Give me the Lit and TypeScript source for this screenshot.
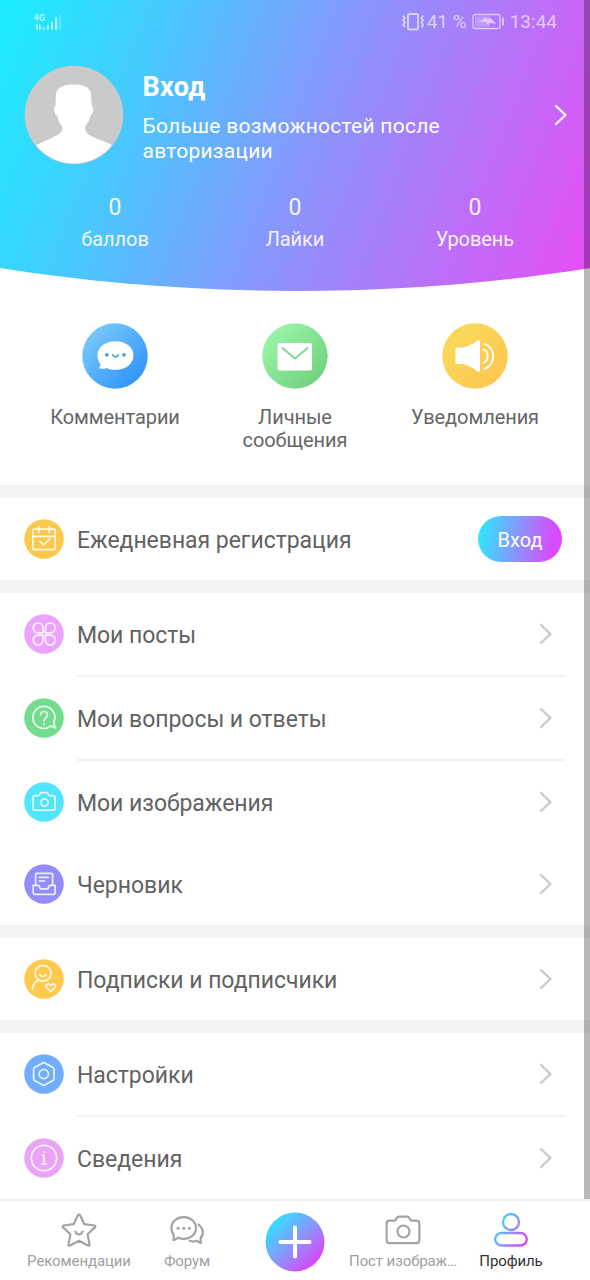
import { LitElement, html, svg, css } from "lit";
import { customElement, property } from "lit/decorators.js";

const chevron = (cls: string) => html`<svg class=${cls} width="14" height="22" viewBox="0 0 14 22" fill="none" stroke="currentColor" stroke-width="2.3" stroke-linecap="round" stroke-linejoin="round"><path d="M2 2l9.500 9L2 20"/></svg>`;

const glyphs: Record<string, unknown> = {
  calendar: svg`<rect x="8.800" y="10.200" width="22.400" height="20.400" rx="1.600"/><path d="M9 17.300H31M14.800 7.600v6M25.200 7.600v6M15.800 22.200l3.600 3.800 6.600-6.400"/>`,
  clover: svg`<path d="M19 18.800h-4.900a4.900 4.900 0 1 1 4.900-4.900zM21.400 18.800h4.900a4.900 4.900 0 1 0-4.900-4.900zM19 21.200h-4.900a4.900 4.900 0 1 0 4.900 4.900zM21.400 21.200h4.900a4.900 4.900 0 1 1-4.900 4.900z"/>`,
  question: svg`<path d="M26.900 27.900A11 11 0 1 1 30.200 23.200c-.7 1.900.3 4.700 1.300 6.700-1.500-.1-3.200-1.300-4.600-2z"/><path d="M16.600 16.800a3.400 3.400 0 1 1 5.300 2.800c-1.300.9-1.900 1.600-1.900 3.200M20 25.600v1"/>`,
  camera: svg`<path d="M10.900 13.600h4l1.900-3h6.400l1.900 3h4a1.800 1.800 0 0 1 1.800 1.800v11a1.800 1.800 0 0 1-1.800 1.800H10.900a1.800 1.800 0 0 1-1.800-1.800v-11a1.800 1.800 0 0 1 1.800-1.800z"/><circle cx="20.500" cy="20.600" r="3.700"/>`,
  draft: svg`<path d="M11.600 21V10.400a1 1 0 0 1 1-1h15a1 1 0 0 1 1 1V21M15.400 13.400h9M15.400 17h5"/><path d="M9.200 21.300h5.600l1.600 3.600h7.500l1.600-3.600h5.600v7.800a1.300 1.300 0 0 1-1.300 1.300H10.500a1.300 1.300 0 0 1-1.300-1.300z"/>`,
  follow: svg`<circle cx="19" cy="14.200" r="7.900"/><path d="M15.900 15.600c1.400 2.500 4.800 2.500 6.200 0M14.600 20.900c-3.800 1.900-5.900 5-6.100 9.200M26.700 32.300l-4-3.700c-1.800-2 .9-4.700 2.900-3.100l1.100.9 1.100-.9c2-1.600 4.700 1.100 2.900 3.100z"/>`,
  settings: svg`<path d="M18.800 9l-8.200 4.600a2 2 0 0 0-1 1.800v9.200a2 2 0 0 0 1 1.800l8.200 4.600a2 2 0 0 0 2 0l8.200-4.600a2 2 0 0 0 1-1.800v-9.200a2 2 0 0 0-1-1.800L20.800 9a2 2 0 0 0-2 0z"/><circle cx="19.800" cy="20" r="4.600"/>`,
  info: svg`<circle cx="20" cy="20" r="12.700"/><path d="M18.500 17.400H20v8.400M17.900 26h4.300M20 13.600v.6"/>`,
};

@customElement("menu-row")
class MenuRow extends LitElement {
  @property() icon = "";
  @property() color = "";
  @property() label = "";
  @property({ type: Boolean }) line = false;
  @property({ type: Boolean }) button = false;

  static styles = css`
    :host { display: block; padding-left: 24px; background: #fff; }
    .row { display: flex; align-items: center; height: 82px; }
    .disc { width: 40px; height: 40px; flex: none; }
    .label { flex: 1; margin-left: 13px; padding-top: 4px; font-size: 23px; line-height: 28px; letter-spacing: -.04px; color: #626262; white-space: nowrap; }
    .arrow { color: #c8c8c8; margin-right: 37px; }
    .line { height: 2px; margin: 0 25px 0 53px; background: #f2f2f2; }
    .login { width: 84px; height: 46px; margin-right: 28px; padding: 2px 0 0; border: 0; border-radius: 23px; background: linear-gradient(100deg, #2de8fc 4%, #dc48fb 88%); color: #fff; font: 20px Roboto, sans-serif; }
  `;

  render() {
    return html`
      <div class="row">
        <svg class="disc" viewBox="0 0 40 40">
          <circle cx="20" cy="20" r="19.800" fill=${this.color}></circle>
          <g fill="none" stroke="#fff" stroke-opacity=".85" stroke-width="1.700" stroke-linecap="round" stroke-linejoin="round">${glyphs[this.icon]}</g>
        </svg>
        <span class="label">${this.label}</span>
        ${this.button ? html`<button class="login">Вход</button>` : chevron("arrow")}
      </div>
      ${this.line ? html`<div class="line"></div>` : ""}
    `;
  }
}

@customElement("app-root")
class AppRoot extends LitElement {
  static styles = css`
    :host { display: flex; flex-direction: column; position: relative; width: 590px; height: 1280px; overflow: hidden; background: #fff; font-family: Roboto, sans-serif; }
    svg { display: block; }
    .hero { box-sizing: border-box; height: 291px; color: #fff; background: linear-gradient(111deg, #1aeffe 0%, #48c8fd 25%, #8896fd 52%, #e94cf6 100%); clip-path: path("M0 0H590V268C400 298.500 190 298.500 0 268Z"); }
    .status { display: flex; align-items: center; height: 43px; padding: 0 33px; opacity: .62; font-size: 19px; }
    .signal { margin-right: auto; }
    .time { margin-left: 5px; }
    .battery { margin-left: 5px; }
    .profile { display: flex; align-items: center; height: 142px; padding: 1px 22px 0 24px; }
    .avatar { flex: none; width: 100px; height: 100px; }
    .who { flex: 1; margin-left: 18.500px; padding-top: 5px; }
    .name { font-size: 27px; line-height: 32px; font-weight: 700; letter-spacing: .3px; }
    .hint { margin-top: 11px; font-size: 21px; line-height: 25px; letter-spacing: .25px; width: 320px; }
    .three { display: grid; grid-template-columns: repeat(3, 180px); justify-content: center; text-align: center; }
    .stat { opacity: .9; }
    .count { font-size: 23px; line-height: 28px; margin-top: 8px; }
    .caption { font-size: 20px; line-height: 24px; margin-top: 5px; letter-spacing: -.05px; }
    .shortcuts { box-sizing: border-box; height: 194px; padding-top: 31.500px; }
    .shortcut { display: flex; flex-direction: column; align-items: center; color: #666; font-size: 20px; line-height: 23px; letter-spacing: -.07px; }
    .shortcut span { margin-top: 17px; max-width: 150px; }
    .gap { height: 13px; background: #f4f4f4; }
    .content { flex: 1; overflow: hidden; }
    .tabs { box-sizing: border-box; flex: none; height: 81px; border-top: 2px solid #f0f0f0; display: grid; grid-template-columns: repeat(5, 108px); padding-left: 25px; background: #fff; }
    .tab { display: flex; flex-direction: column; align-items: center; padding-top: 10px; color: #a0a0a0; font-size: 15px; line-height: 18px; letter-spacing: -.1px; white-space: nowrap; }
    .tab span { margin-top: 3px; }
    .current { color: #333; }
    .plus { padding-top: 11px; }
    .scrollbar { position: absolute; right: 0; top: 0; width: 6px; height: 1199px; background: rgba(0, 0, 0, .28); }
  `;

  render() {
    return html`
      <div class="content">
        <header class="hero">
          <div class="status">
            <svg class="signal" width="30" height="22" viewBox="0 0 30 22" fill="#fff"><text x="0.500" y="9.500" font-family="Roboto" font-size="9" font-weight="700">4G</text><path d="M1.500 15.500l2.500-3 .8.800v5.400H3v-4zM6 12.700h1.300v3.600l1.700-.3v.8l-2 2-1-1zM10 16.700h2v2h-2zM14 14.500h2v4.200h-2zM18 11h2v7.700h-2zM22 6.500h2.200v12.200H22z"/><path opacity=".35" d="M26 2.500h2v16.200h-2z"/></svg>
            <svg width="26" height="22" viewBox="0 0 26 22" fill="none" stroke="#fff" stroke-width="1.900"><rect x="7" y="3" width="10" height="15.500" rx="1.500"/><path d="M2 5l1.800 2L2.200 9.200 3.800 11.500l-1.600 2.300L3.800 16M22 4.500L20.500 7l1.500 2.300-1.500 2.400 1.500 2.300-1.200 2.500"/></svg>
            <span>41 %</span>
            <svg class="battery" width="33" height="18" viewBox="0 0 33 18"><rect x="1" y="1.500" width="27" height="14" rx="2" fill="none" stroke="#fff" stroke-width="1.300"/><path d="M3 3.500h15v10H3z" fill="#fff" opacity=".4"/><path d="M7 8.500l7.500-4.300 1 3 2.500-2.400 6.500 5.900-7.500-.8-.8 2-2.700-3z" fill="#fff"/><path d="M31 4.500v8" stroke="#fff" stroke-width="1.800"/></svg>
            <span class="time">13:44</span>
          </div>
          <div class="profile">
            <svg class="avatar" viewBox="0 0 100 100">
              <defs><clipPath id="face"><circle cx="50" cy="50" r="48.500"/></clipPath></defs>
              <circle cx="50" cy="50" r="49.300" fill="#cacaca"/>
              <path clip-path="url(#face)" fill="#fff" d="M32 29C33 22 40 19.500 50 19.500S66 22 67 29l.7 12c1.800.3 2 3 1.300 5.500-.5 2.200-1.500 4-2.800 4.300-.8 5-3.200 8.500-5.200 11-.5 7 5.500 8.700 10.500 11.200C79.500 76.500 86 78 92 83v19H8V83c6-4.500 13-6.500 20.500-10.500C33.500 70 39 68 38.500 61.800c-2.500-2.500-4.300-6-5.200-11-1.500-.3-2.500-2.100-3-4.300-.6-2.500-.2-5.200 1.200-5.500z"/>
            </svg>
            <div class="who"><div class="name">Вход</div><div class="hint">Больше возможностей после авторизации</div></div>
            ${chevron("go")}
          </div>
          <div class="three">
            ${["баллов", "Лайки", "Уровень"].map((t) => html`<div class="stat"><div class="count">0</div><div class="caption">${t}</div></div>`)}
          </div>
        </header>
        <section class="three shortcuts">
          <div class="shortcut">
            <svg width="66" height="66" viewBox="0 0 66 66"><defs><linearGradient id="b" x1="0" y1="0" x2="1" y2="1"><stop offset=".1" stop-color="#7bcbfa"/><stop offset=".9" stop-color="#2e92fb"/></linearGradient></defs><circle cx="33" cy="33" r="32.700" fill="url(#b)"/><path fill="#fff" d="M33.500 18.300c10.500 0 18 6.200 18 14.200s-7.500 14.300-18 14.300c-3.400 0-6.400-.7-9-1.900-2.500 1-5 1.200-8 .4 1.600-1.300 2.200-2.700 1.800-4.500-1.800-2.300-2.800-5.100-2.800-8.300 0-8 7.500-14.200 18-14.200z"/><g fill="#429cf8"><circle cx="24.800" cy="31.800" r="1.900"/><circle cx="42" cy="31.800" r="1.900"/></g><path d="M30.800 32c.8 2.400 4.700 2.400 5.500 0" fill="none" stroke="#429cf8" stroke-width="1.800" stroke-linecap="round"/></svg>
            <span>Комментарии</span>
          </div>
          <div class="shortcut">
            <svg width="66" height="66" viewBox="0 0 66 66"><defs><linearGradient id="g" x1="0" y1="0" x2="1" y2="1"><stop offset=".1" stop-color="#9cf6a7"/><stop offset=".9" stop-color="#70cf80"/></linearGradient></defs><circle cx="33" cy="33" r="32.700" fill="url(#g)"/><rect x="15.500" y="20" width="34.500" height="27.500" rx="2" fill="#fff"/><path d="M20.500 25L33 35.500 45.500 25" fill="none" stroke="#7fda8d" stroke-width="2" stroke-linecap="round" stroke-linejoin="round"/></svg>
            <span>Личные сообщения</span>
          </div>
          <div class="shortcut">
            <svg width="66" height="66" viewBox="0 0 66 66"><defs><linearGradient id="y" x1="0" y1="0" x2="1" y2="1"><stop offset=".1" stop-color="#f7da5a"/><stop offset=".9" stop-color="#ffc64f"/></linearGradient></defs><circle cx="33" cy="33" r="32.700" fill="url(#y)"/><path fill="#fff" d="M15 24.500h6c6.500-1.500 10.500-4 14.500-7 1.300-.8 2.500-.3 2.500 1.200v28.600c0 1.500-1.200 2-2.500 1.200-4-3-8-6-14.500-7.500h-6a1.500 1.500 0 0 1-1.500-1.500V26a1.500 1.500 0 0 1 1.500-1.500z"/><g fill="none" stroke="#fff" stroke-width="1.900" stroke-linecap="round"><path d="M41.500 26.500c5.500 2 5.500 11 0 13.300"/><path d="M42.500 20.800c11.500 3.500 11.500 21.500 0 25"/></g></svg>
            <span>Уведомления</span>
          </div>
        </section>
        <div class="gap"></div>
        <menu-row icon="calendar" color="#fbc84e" label="Ежедневная регистрация" button></menu-row>
        <div class="gap"></div>
        <menu-row icon="clover" color="#eca3fd" label="Мои посты" line></menu-row>
        <menu-row icon="question" color="#74dc8d" label="Мои вопросы и ответы" line></menu-row>
        <menu-row icon="camera" color="#52e3fd" label="Мои изображения"></menu-row>
        <menu-row icon="draft" color="#928dfa" label="Черновик"></menu-row>
        <div class="gap"></div>
        <menu-row icon="follow" color="#fdc94e" label="Подписки и подписчики"></menu-row>
        <div class="gap"></div>
        <menu-row icon="settings" color="#70adfa" label="Настройки" line></menu-row>
        <menu-row icon="info" color="#e9a4f8" label="Сведения"></menu-row>
      </div>
      <nav class="tabs">
        <div class="tab">
          <svg width="38" height="38" viewBox="0 0 38 38" fill="none" stroke="#a3a3a3" stroke-width="2.200" stroke-linecap="round" stroke-linejoin="round"><path d="M17.900 4.300q1.100-2 2.200 0l4.300 8.900 10 1.300q1.800.5.500 1.900l-7.300 6.900 1.900 10.100q0 1.700-1.600 1.100L19 29.700l-8.900 4.800q-1.600.6-1.600-1.100l1.900-10.100-7.300-6.900q-1.300-1.400.5-1.900l10-1.300z"/><path d="M15.500 20.500c1 3.800 6 3.800 7 0"/></svg>
          <span>Рекомендации</span>
        </div>
        <div class="tab">
          <svg width="38" height="38" viewBox="0 0 38 38" fill="none" stroke="#a3a3a3" stroke-width="2.200" stroke-linecap="round" stroke-linejoin="round"><path d="M15.700 6.200C22.700 6.200 28 10.800 28 17s-5.300 10.800-12.300 10.800c-2 0-3.900-.3-5.500-1.100l-4.600 2.500.1-5.400C4.100 22 3.400 19.600 3.400 17c0-6.200 5.300-10.800 12.300-10.800z"/><path d="M30.500 13.500c5 4 5.600 9.300 2.200 13.300l.1 5.200-4.300-2.200c-2.400 1-4.800.9-7 0"/><path d="M10 17.300h.1M15.700 17.300h.1M21.400 17.300h.1" stroke-width="3"/></svg>
          <span>Форум</span>
        </div>
        <div class="tab plus">
          <svg width="60" height="60" viewBox="0 0 60 60"><defs><linearGradient id="p" x1="0" y1="0" x2="1" y2="1"><stop offset=".1" stop-color="#29e7fd"/><stop offset=".52" stop-color="#8d93fc"/><stop offset=".9" stop-color="#e43bf8"/></linearGradient></defs><circle cx="30" cy="30" r="29.500" fill="url(#p)"/><path d="M30 15.500v29M15.500 30h29" stroke="#fff" stroke-width="4" stroke-linecap="round"/></svg>
        </div>
        <div class="tab">
          <svg width="38" height="38" viewBox="0 0 38 38" fill="none" stroke="#a3a3a3" stroke-width="2.200" stroke-linejoin="round"><path d="M5.600 9.700h4.600q1 0 1.500-1l1.300-2.100q.6-1 1.700-1h8.600q1.100 0 1.700 1L26.300 8.700q.5 1 1.500 1h4.600a3 3 0 0 1 3 3v16.500a3 3 0 0 1-3 3H5.600a3 3 0 0 1-3-3V12.700a3 3 0 0 1 3-3z"/><circle cx="19.500" cy="20.500" r="6"/></svg>
          <span>Пост изображ…</span>
        </div>
        <div class="tab current">
          <svg width="38" height="38" viewBox="0 0 38 38" fill="none" stroke="url(#u)" stroke-width="2.300"><defs><linearGradient id="u" gradientUnits="userSpaceOnUse" x1="3" y1="12" x2="33" y2="33"><stop offset="0" stop-color="#3bdcf5"/><stop offset=".5" stop-color="#8d93f8"/><stop offset="1" stop-color="#e03ff5"/></linearGradient></defs><circle cx="19" cy="11" r="8"/><rect x="3.200" y="22" width="31.600" height="12.500" rx="6.200"/></svg>
          <span>Профиль</span>
        </div>
      </nav>
      <div class="scrollbar"></div>
    `;
  }
}
